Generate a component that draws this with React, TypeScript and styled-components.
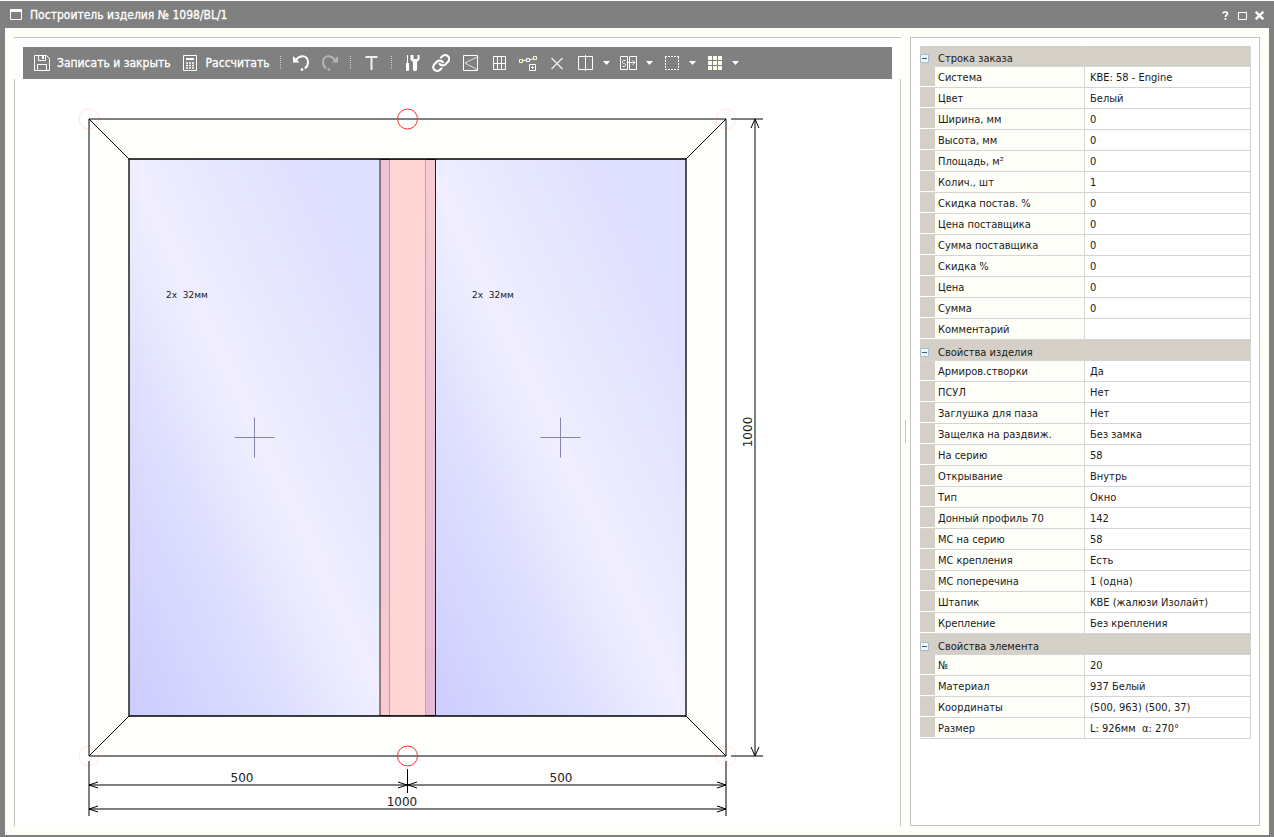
import React from "react";
import styled, { createGlobalStyle } from "styled-components";

const GlobalStyle = createGlobalStyle`
  *, *::before, *::after { box-sizing: border-box; }
  body {
    margin: 0;
    background: #fffffa;
    color: #1a1a1a;
    font: 11px/14px "DejaVu Sans Condensed", "DejaVu Sans", sans-serif;
  }
  button { font: inherit; color: inherit; background: none; border: 0; padding: 0; margin: 0; }
`;

const Window = styled.div`
  display: flex;
  flex-direction: column;
  min-height: 100vh;
  padding-top: 1px;
`;

const TitleBar = styled.header`
  display: flex;
  align-items: center;
  height: 27px;
  padding: 0 7px 0 10px;
  background: #808080;
  color: #fff;
`;

const Title = styled.h1`
  flex: 1;
  margin: 0 0 0 7px;
  font-size: 12px;
  line-height: 16px;
  font-weight: 400;
  -webkit-text-stroke: 0.3px #fff;
`;

const WindowControls = styled.div`
  display: flex;
  align-items: center;
  gap: 2px;
  padding-top: 2px;
`;

const ControlButton = styled.button`
  display: flex;
  align-items: center;
  justify-content: center;
  width: 15px;
  height: 16px;
`;

const Body = styled.main`
  display: flex;
  flex: 1;
  padding: 9px 9px 9px 9px;
  border: solid #808080;
  border-width: 0 5px 2px 5px;
`;

const Editor = styled.section`
  display: flex;
  flex-direction: column;
  flex: 1;
  min-width: 0;
  border-top: 1px solid #c4c4c4;
  background: #fff;
`;

const ToolbarArea = styled.div`
  padding: 9px 9px 0;
`;

const Toolbar = styled.div`
  display: flex;
  align-items: stretch;
  height: 32px;
  padding-left: 3px;
  background: #808080;
  color: #fff;
`;

const TextButton = styled.button`
  display: flex;
  align-items: center;
  gap: 7px;
  padding: 0 4px 0 8px;
  font-size: 12px;
  line-height: 16px;
  white-space: nowrap;
  -webkit-text-stroke: 0.3px #fff;
`;

const IconButton = styled.button<{ $menu?: boolean }>`
  display: flex;
  align-items: center;
  gap: 8px;
  flex: none;
  width: ${(p) => (p.$menu ? 43 : 29)}px;
  padding-left: 5px;
`;

const Separator = styled.span`
  flex: none;
  align-self: center;
  width: 1px;
  height: 14px;
  margin: 0 5px 0 6px;
  background: repeating-linear-gradient(#d0d0d0 0 1px, transparent 1px 2px);
`;

const Canvas = styled.div`
  flex: 1;
  border: solid #c4c4c4;
  border-width: 0 1px;
`;

const Drawing = styled.svg`
  display: block;
  width: 100%;
  height: 746px;
`;

const DrawingNote = styled.text`
  fill: #1a1a1a;
  stroke: none;
  font: 9px "DejaVu Sans", sans-serif;
`;

const Splitter = styled.div`
  display: flex;
  align-items: center;
  justify-content: center;
  flex: none;
  width: 9px;
`;

const Grip = styled.span`
  width: 1px;
  height: 23px;
  background: #c4c4c4;
`;

const Properties = styled.aside`
  flex: none;
  width: 350px;
  padding: 8px 8px 8px 9px;
  border: 1px solid #c4c4c4;
  background: #fff;
`;

const Grid = styled.table`
  width: 100%;
  table-layout: fixed;
  border-collapse: separate;
  border-spacing: 0;
`;

const GutterCol = styled.col`
  width: 15px;
`;

const LabelCol = styled.col`
  width: 150px;
`;

const Gutter = styled.td`
  height: 21px;
  padding: 0 0 1px;
  border-bottom: 1px solid #d4d4d4;
  background: #d4d0c8;
  background-clip: content-box;
`;

const Label = styled.th`
  height: 21px;
  padding: 2px 0 0 3px;
  border: solid #d4d4d4;
  border-width: 0 1px 1px 0;
  background: #fffffa;
  font-weight: 400;
  text-align: left;
  white-space: nowrap;
`;

const Value = styled.td`
  height: 21px;
  padding: 2px 0 0 5px;
  border: solid #d4d4d4;
  border-width: 0 1px 1px 0;
  white-space: pre;
`;

const GroupCell = styled.th`
  height: 21px;
  padding: 6px 0 0 3px;
  background: #d4d0c8;
  border: solid #d4d4d4;
  border-width: 0 0 1px;
  font-weight: 400;
  text-align: left;
`;

const GroupValue = styled.td`
  height: 21px;
  background: #d4d0c8;
  border: solid #d4d4d4;
  border-width: 0 1px 1px;
`;

const GroupToggleCell = styled.td`
  height: 21px;
  padding: 4px 0 0;
  background: #d4d0c8;
  border-bottom: 1px solid #d4d4d4;
`;

const Toggle = styled.button`
  display: flex;
  width: 9px;
  height: 9px;
`;

type Row = [string, string];
const groups: { name: string; rows: Row[] }[] = [
  {
    name: "Строка заказа",
    rows: [
      ["Система", "KBE: 58 - Engine"],
      ["Цвет", "Белый"],
      ["Ширина, мм", "0"],
      ["Высота, мм", "0"],
      ["Площадь, м²", "0"],
      ["Колич., шт", "1"],
      ["Скидка постав. %", "0"],
      ["Цена поставщика", "0"],
      ["Сумма поставщика", "0"],
      ["Скидка %", "0"],
      ["Цена", "0"],
      ["Сумма", "0"],
      ["Комментарий", ""],
    ],
  },
  {
    name: "Свойства изделия",
    rows: [
      ["Армиров.створки", "Да"],
      ["ПСУЛ", "Нет"],
      ["Заглушка для паза", "Нет"],
      ["Защелка на раздвиж.", "Без замка"],
      ["На серию", "58"],
      ["Открывание", "Внутрь"],
      ["Тип", "Окно"],
      ["Донный профиль 70", "142"],
      ["МС на серию", "58"],
      ["МС крепления", "Есть"],
      ["МС поперечина", "1 (одна)"],
      ["Штапик", "KBE (жалюзи Изолайт)"],
      ["Крепление", "Без крепления"],
    ],
  },
  {
    name: "Свойства элемента",
    rows: [
      ["№", "20"],
      ["Материал", "937 Белый"],
      ["Координаты", "(500, 963) (500, 37)"],
      ["Размер", "L: 926мм  α: 270°"],
    ],
  },
];

const Icon = ({ children, color = "#fff", width = 19 }: { children: React.ReactNode; color?: string; width?: number }) => (
  <svg width={width} height="18" viewBox={`0 0 ${width} 18`} fill="none" stroke={color} aria-hidden="true">
    {children}
  </svg>
);

const Caret = () => (
  <svg width="7" height="4" viewBox="0 0 7 4" fill="#fff" aria-hidden="true">
    <path d="M0 0h7L3.500 4z" />
  </svg>
);

const icons = {
  undo: (
    <Icon>
      <path d="M2 2v6.500h6.500z" fill="#fff" stroke="none" />
      <path d="M5 6C7 3.300 9 2.200 11.500 2.200 15 2.200 17 5 17 8.200 17 11 16 13 13.800 14.300" strokeWidth="2" />
      <path d="M11 13.800l1.700 1.700L11 17.200 9.300 15.500z" fill="#fff" stroke="none" />
    </Icon>
  ),
  redo: (
    <Icon color="#b4b4b4">
      <path d="M18 2v6.500h-6.500z" fill="#b4b4b4" stroke="none" />
      <path d="M15 6C13 3.300 11 2.200 8.500 2.200 5 2.200 3 5 3 8.200 3 11 4 13 6.200 14.300" strokeWidth="2" />
      <path d="M9 13.800l1.700 1.700L9 17.200 7.300 15.500z" fill="#b4b4b4" stroke="none" />
    </Icon>
  ),
  text: (
    <Icon color="#f0f0f0">
      <path d="M4.500 3h12M10.500 3v13" strokeWidth="2" />
    </Icon>
  ),
  tools: (
    <Icon>
      <path d="M5.500 1v8" />
      <path d="M4 9h3v7l-.5 1h-2L4 16z" fill="#fff" stroke="none" />
      <path d="M8.500 1v4.500l2.500 2.500v8l1 1h2l1-1V8l2.500-2.500V1h-2v4h-4V1z" fill="#fff" stroke="none" />
    </Icon>
  ),
  link: (
    <Icon>
      <g transform="translate(.6 -.6) scale(.8)" strokeWidth="2.700" strokeLinecap="round">
        <path d="M10 13a5 5 0 0 0 7.540.54l3-3a5 5 0 0 0-7.070-7.070l-1.720 1.710" />
        <path d="M14 11a5 5 0 0 0-7.540-.54l-3 3a5 5 0 0 0 7.070 7.070l1.710-1.710" />
      </g>
    </Icon>
  ),
  sash: (
    <Icon>
      <path d="M3.500 1.500h14v15h-14z" />
      <path d="M17 3L5 9l12 6.500" stroke="#e4e4e4" />
    </Icon>
  ),
  layout: (
    <Icon>
      <path d="M4.500 2.500h12v13h-12zM8.500 2.500v13M12.500 2.500v13M4.500 9.500h12" />
    </Icon>
  ),
  nodes: (
    <Icon>
      <path d="M4.500 7l4-1M12 6l3.500-1.500" />
      <path d="M1.500 5.500h3v3h-3zM15.500 2.500h3v3h-3z" stroke="#ffffc8" />
      <path d="M8.500 4.500h3v3h-3zM11.500 10.500h6v6h-6zM14.500 12v3M13 13.500h3" />
    </Icon>
  ),
  remove: (
    <Icon color="#e8e8e8">
      <path d="M4.500 4L15.500 15M15.500 4L4.500 15" strokeWidth="1.500" />
    </Icon>
  ),
  split: (
    <Icon>
      <path d="M2.500 2.500h14v13h-14zM9.500 1v16" />
    </Icon>
  ),
  swap: (
    <Icon>
      <path d="M1.500 2.500h7v13h-7zM10.500 2.500h7v13h-7z" />
      <path d="M6.500 6.500h-2l-1 1v1l1 1h1l1 1v1l-1 1h-2" />
      <path d="M8 8.500h8M13.500 6l2.500 2.500-2.500 2.500" />
    </Icon>
  ),
  select: (
    <Icon>
      <path d="M3 2.500h14M3 15.500h14" strokeDasharray="2 1" />
      <path d="M3.500 3v12M16.500 3v12" strokeDasharray="2 1" />
    </Icon>
  ),
  tiles: (
    <Icon>
      {[2, 7, 12].map((y) =>
        [3, 8, 13].map((x) => <rect key={`${x}-${y}`} x={x} y={y} width="4" height="4" fill="#fffff0" stroke="none" />)
      )}
    </Icon>
  ),
};

const SaveIcon = () => (
  <Icon width={16}>
    <path d="M.5 1.500h12l3 3v12H.5z" />
    <path d="M4.500 1v5.500h7V1" />
    <path d="M8 2h2v3H8z" fill="#fff" stroke="none" />
    <path d="M3.500 16.500v-6h9v6" />
  </Icon>
);

const CalcIcon = () => (
  <Icon width={16}>
    <path d="M.5 1.500h13v15H.5z" />
    <path d="M3 4h8v2H3z" fill="#fff" stroke="none" />
    <path d="M3 9h8M3 11.500h8M3 14h8" strokeWidth="1.500" strokeDasharray="2 1" />
  </Icon>
);

const Tool = ({ icon, label, menu }: { icon: keyof typeof icons; label: string; menu?: boolean }) => (
  <IconButton type="button" aria-label={label} $menu={menu}>
    {icons[icon]}
    {menu && <Caret />}
  </IconButton>
);

const Glass = ({ x, width }: { x: number; width: number }) => (
  <rect x={x} y="159" width={width} height="557" fill="url(#glass)" stroke="none" />
);

const Cross = ({ x, y }: { x: number; y: number }) => (
  <path d={`M${x - 20} ${y}h40M${x} ${y - 20}v40`} stroke="#8484b4" />
);

const WindowDrawing = () => (
  <Drawing viewBox="15 79 885 746" preserveAspectRatio="xMinYMin meet" fill="none" stroke="#000" role="img" aria-label="Чертёж изделия">
    <defs>
      <linearGradient id="glass" x1="0" y1="1" x2="1" y2="0">
        <stop offset="0" stopColor="#ccccff" />
        <stop offset=".3" stopColor="#dedeff" />
        <stop offset=".42" stopColor="#e8eaff" />
        <stop offset=".5" stopColor="#f0eeff" />
        <stop offset=".6" stopColor="#e8eaff" />
        <stop offset=".82" stopColor="#e0e0ff" />
        <stop offset="1" stopColor="#dfdfff" />
      </linearGradient>
    </defs>

    <path d="M89 119h637v637H89z" fill="#fffffc" />
    <path d="M89 119l40 40M726 119l-40 40M726 756l-40-40M89 756l40-40" />
    <Glass x={129} width={261} />
    <Glass x={426} width={260} />
    <path d="M129 159h557v557H129z" strokeWidth="1.300" />

    <path d="M390 159h36v557h-36z" fill="#fff" stroke="none" />
    <path d="M380 159.500h55.500v556H380z" fill="#ffa5a5" fillOpacity=".48" strokeOpacity=".85" />
    <path d="M389.500 160v555M425.500 160v555" stroke="#705070" strokeOpacity=".4" />

    <Cross x={254.5} y={437.5} />
    <Cross x={560.5} y={437.5} />

    <g stroke="#ff3030">
      <circle cx="407.500" cy="119" r="10" />
      <circle cx="407.500" cy="756" r="10" />
    </g>
    <g stroke="#ff0000" strokeOpacity=".1">
      <circle cx="89" cy="119" r="10" />
      <circle cx="726" cy="119" r="10" />
      <circle cx="89" cy="756" r="10" />
      <circle cx="726" cy="756" r="10" />
    </g>

    <path d="M731 119h32M731 756h32M755 119v637" />
    <path d="M751 128l4-9 4 9M751 747l4 9 4-9" />
    <path d="M89 761v55M726 761v55M407.500 769v24M89 785h637M89 809h637" />
    <path d="M98 782l-9 3 9 3M717 782l9 3-9 3M398 782l9 3-9 3M417 782l-9 3 9 3M98 806l-9 3 9 3M717 806l9 3-9 3" />

    <g fill="#1a1a1a" stroke="none" fontFamily="'DejaVu Sans', sans-serif" fontSize="12" textAnchor="middle">
      <text x="242" y="782">500</text>
      <text x="561" y="782">500</text>
      <text x="402" y="806">1000</text>
      <text transform="translate(752 432) rotate(-90)">1000</text>
    </g>
    <DrawingNote x="166" y="298">{"2x\u00a0 32мм"}</DrawingNote>
    <DrawingNote x="472" y="298">{"2x\u00a0 32мм"}</DrawingNote>
  </Drawing>
);

export default function App() {
  return (
    <>
      <GlobalStyle />
      <Window>
        <TitleBar>
          <svg width="13" height="13" viewBox="0 0 13 13" fill="none" stroke="#fff" aria-hidden="true">
            <path d="M.5 1.500h11v10H.5z" />
            <path d="M0 1h12v3H0z" fill="#fff" stroke="none" />
          </svg>
          <Title>Построитель изделия № 1098/BL/1</Title>
          <WindowControls>
            <ControlButton type="button" aria-label="Справка">
              <svg width="7" height="9" viewBox="0 0 7 9" fill="none" stroke="#fff" strokeWidth="1.700">
                <path d="M1 2.500C1 .5 5.500.5 5.500 2.500 5.500 4 3.500 4 3.500 6M3.500 7v2" />
              </svg>
            </ControlButton>
            <ControlButton type="button" aria-label="Развернуть">
              <svg width="9" height="9" viewBox="0 0 9 9" fill="none" stroke="#fff">
                <path d="M.5 1.500h8v7h-8zM0 1.500h9" />
              </svg>
            </ControlButton>
            <ControlButton type="button" aria-label="Закрыть">
              <svg width="9" height="9" viewBox="0 0 9 9" fill="none" stroke="#fff" strokeWidth="2.400">
                <path d="M.7.7l7.600 7.600M8.300.7L.7 8.300" />
              </svg>
            </ControlButton>
          </WindowControls>
        </TitleBar>

        <Body>
          <Editor>
            <ToolbarArea>
              <Toolbar role="toolbar">
                <TextButton type="button">
                  <SaveIcon />
                  Записать и закрыть
                </TextButton>
                <TextButton type="button">
                  <CalcIcon />
                  Рассчитать
                </TextButton>
                <Separator />
                <Tool icon="undo" label="Отменить" />
                <Tool icon="redo" label="Вернуть" />
                <Separator />
                <Tool icon="text" label="Текст" />
                <Separator />
                <Tool icon="tools" label="Фурнитура" />
                <Tool icon="link" label="Связи" />
                <Tool icon="sash" label="Створка" />
                <Tool icon="layout" label="Раскладка" />
                <Tool icon="nodes" label="Добавить узел" />
                <Tool icon="remove" label="Удалить" />
                <Tool icon="split" label="Разделить" menu />
                <Tool icon="swap" label="Заменить" menu />
                <Tool icon="select" label="Выделить" menu />
                <Tool icon="tiles" label="Выровнять" menu />
              </Toolbar>
            </ToolbarArea>
            <Canvas>
              <WindowDrawing />
            </Canvas>
          </Editor>

          <Splitter>
            <Grip />
          </Splitter>

          <Properties>
            <Grid>
              <colgroup>
                <GutterCol />
                <LabelCol />
                <col />
              </colgroup>
              {groups.map((group) => (
                <tbody key={group.name}>
                  <tr>
                    <GroupToggleCell>
                      <Toggle type="button" aria-label="Свернуть">
                        <svg width="9" height="9" viewBox="0 0 9 9" fill="#eef6fa" stroke="#a4bccc">
                          <path d="M.5.5h8v8h-8z" />
                          <path d="M2 4.500h5" stroke="#2c5c80" />
                        </svg>
                      </Toggle>
                    </GroupToggleCell>
                    <GroupCell scope="rowgroup">{group.name}</GroupCell>
                    <GroupValue />
                  </tr>
                  {group.rows.map(([label, value]) => (
                    <tr key={label}>
                      <Gutter />
                      <Label scope="row">{label}</Label>
                      <Value>{value}</Value>
                    </tr>
                  ))}
                </tbody>
              ))}
            </Grid>
          </Properties>
        </Body>
      </Window>
    </>
  );
}
